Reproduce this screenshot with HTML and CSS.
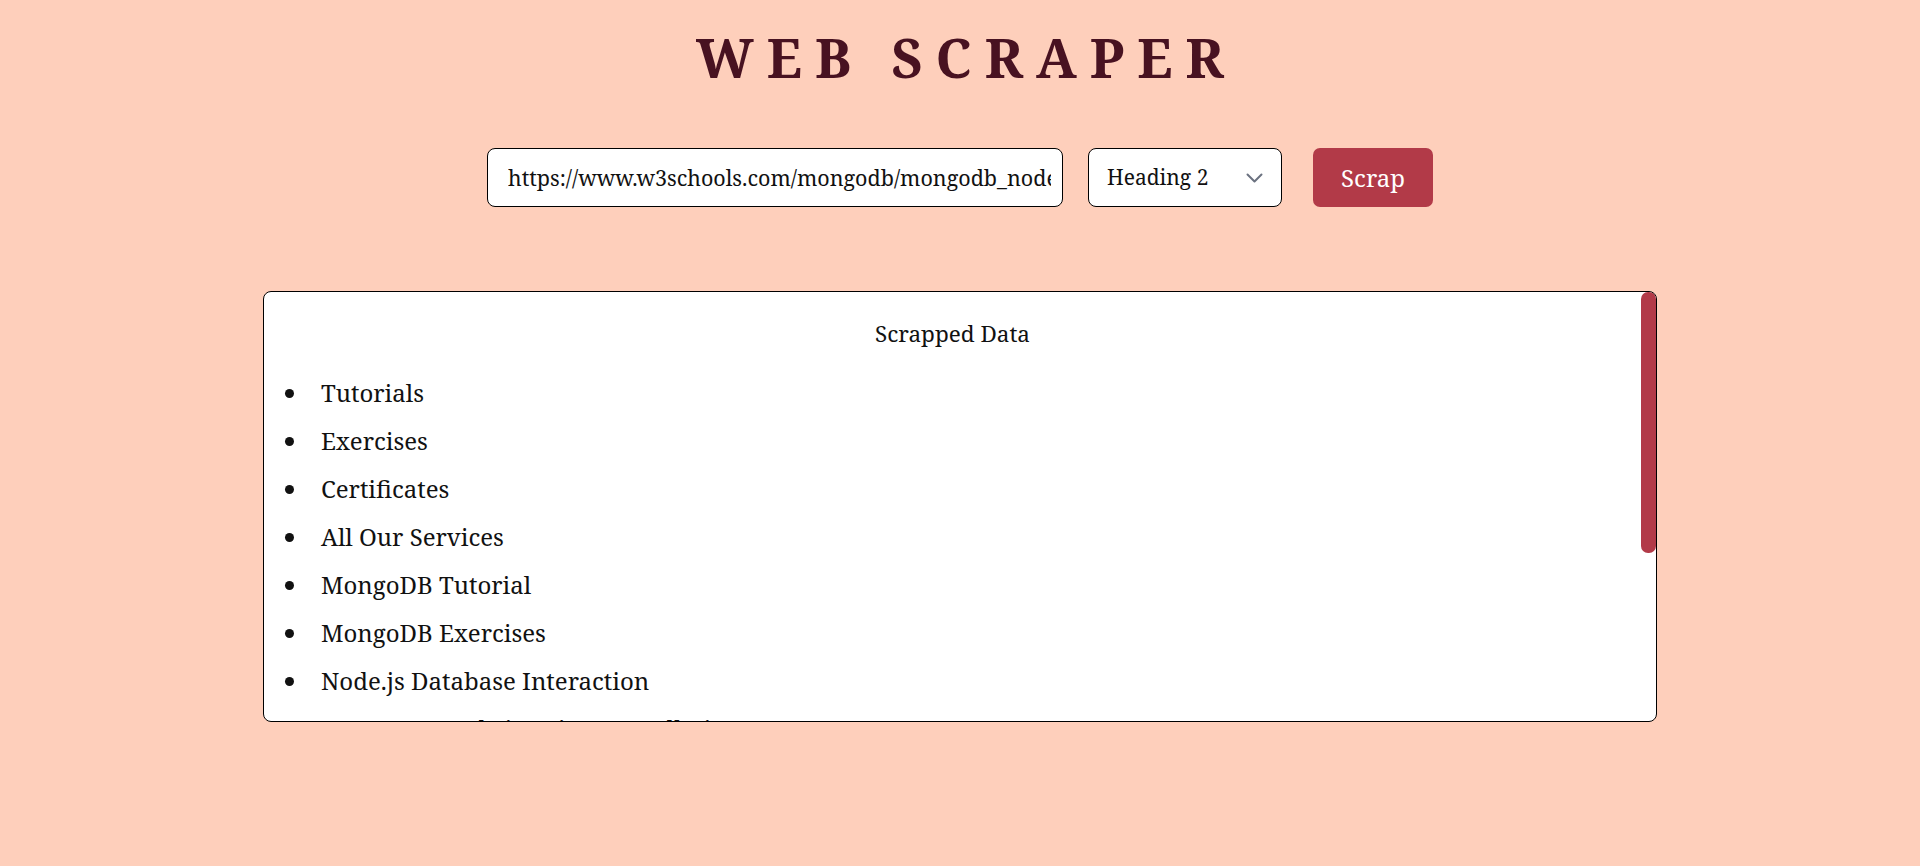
FILE: index.html
```html
<!DOCTYPE html>
<html lang="en">
<head>
<meta charset="utf-8">
<title>Web Scraper</title>
<link rel="stylesheet" href="styles.css">
</head>
<body>
<main class="page">
  <h1 class="title">WEB SCRAPER</h1>
  <form class="controls">
    <input class="url-input" type="text" value="https://www.w3schools.com/mongodb/mongodb_nodejs_connect_database.php">
    <div class="select-wrap">
      <select class="tag-select">
        <option>Heading 2</option>
      </select>
      <svg class="chevron" width="17" height="10" viewBox="0 0 17 10" fill="none"><path d="M1.5 1.5l7 7 7-7" stroke="#6b7280" stroke-width="2" stroke-linecap="round" stroke-linejoin="round"/></svg>
    </div>
    <button class="scrap-btn" type="button">Scrap</button>
  </form>
  <div class="result-wrap">
    <section class="result">
      <h2 class="result-title">Scrapped Data</h2>
      <ul class="result-list">
        <li>Tutorials</li>
        <li>Exercises</li>
        <li>Certificates</li>
        <li>All Our Services</li>
        <li>MongoDB Tutorial</li>
        <li>MongoDB Exercises</li>
        <li>Node.js Database Interaction</li>
        <li>MongoDB Node.js Driver Installation</li>
        <li>Connection String</li>
        <li>Connect to MongoDB</li>
        <li>Report Error</li>
        <li>Thank You For Helping Us!</li>
      </ul>
    </section>
    <div class="scroll-thumb"></div>
  </div>
</main>
</body>
</html>
```

FILE: styles.css
```css
html, body {
  margin: 0;
  padding: 0;
}
body {
  background: #fecfbb;
  font-family: "Noto Serif", "DejaVu Serif", "Liberation Serif", serif;
  color: #111;
  height: 866px;
  overflow: hidden;
}
.page {
  display: flex;
  flex-direction: column;
  align-items: center;
  padding-top: 21px;
}
.title {
  margin: 0;
  font-size: 54px;
  font-weight: 700;
  letter-spacing: 13px;
  padding-left: 13px;
  color: #481221;
  line-height: 1.362;
}
.controls {
  display: flex;
  align-items: center;
  margin-top: 53px;
}
.url-input {
  box-sizing: border-box;
  width: 576px;
  height: 59px;
  border: 1px solid #000;
  border-radius: 8px;
  padding: 0 11px 0 20px;
  font-family: inherit;
  font-size: 21.5px;
  color: #111;
  background: #fff;
  outline: none;
}
.select-wrap {
  position: relative;
  margin-left: 25px;
}
.tag-select {
  appearance: none;
  -webkit-appearance: none;
  box-sizing: border-box;
  width: 194px;
  height: 59px;
  border: 1px solid #000;
  border-radius: 8px;
  padding: 0 40px 0 18px;
  font-family: inherit;
  font-size: 21px;
  color: #111;
  background: #fff;
  outline: none;
}
.chevron {
  position: absolute;
  right: 19px;
  top: 25px;
  pointer-events: none;
}
.scrap-btn {
  margin-left: 31px;
  box-sizing: border-box;
  width: 120px;
  height: 59px;
  border: none;
  border-radius: 7px;
  background: #b23a48;
  color: #fff;
  font-family: inherit;
  font-size: 24px;
  padding: 0;
}
.result-wrap {
  position: relative;
  margin-top: 84px;
}
.result {
  box-sizing: border-box;
  width: 1394px;
  height: 431px;
  border: 1px solid #000;
  border-radius: 8px;
  background: #fff;
  overflow: hidden;
  padding: 28px 15px 28px 0;
}
.scroll-thumb {
  position: absolute;
  top: 1px;
  right: 1px;
  width: 15px;
  height: 261px;
  border-radius: 7px;
  background: #b23a48;
}
.result-title {
  margin: 0;
  text-align: center;
  font-size: 22.5px;
  font-weight: 400;
  line-height: 27px;
}
.result-list {
  margin: 22px 0 24px 0;
  padding-left: 45px;
  font-size: 24px;
}
.result-list li {
  line-height: 48px;
  padding-left: 12px;
}
```
